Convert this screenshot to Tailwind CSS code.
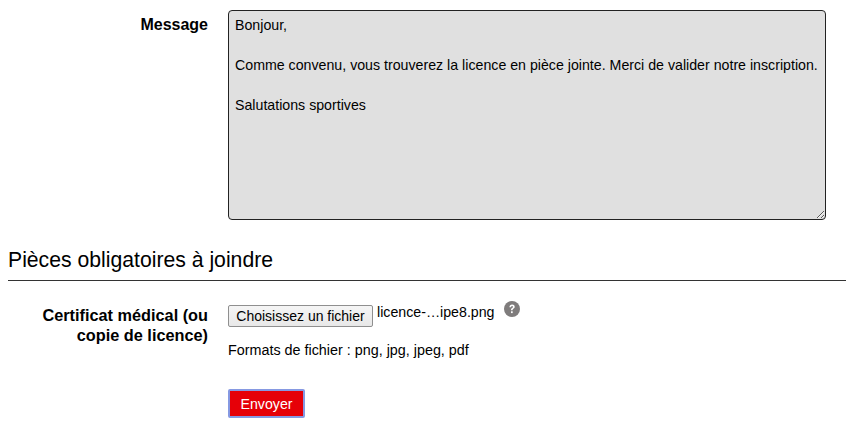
<!DOCTYPE html>
<html>
	<head>
		<title>Message</title>
		<meta charset="utf-8" />
		<script src="https://cdn.jsdelivr.net/npm/@tailwindcss/browser@4"></script>
	</head>
	<body class="bg-white text-black font-['Liberation_Sans',Arial,sans-serif] text-[14px] leading-[20px] overflow-hidden">
		<div class="w-[860px] h-[438px] px-2 pt-[10px]">
			<div class="flex">
				<label class="w-[200px] shrink-0 text-right font-bold text-[16px] leading-[30px]">Message</label>
				<textarea disabled class="ml-5 block w-[598px] h-[210px] bg-[#e0e0e0] border border-[#222] rounded-[4px] px-[6px] py-[4px] text-[14.2px] leading-[20px] text-black resize-y overflow-hidden">Bonjour,

Comme convenu, vous trouverez la licence en pièce jointe. Merci de valider notre inscription.

Salutations sportives</textarea>
			</div>
			<h2 class="mt-[28px] text-[21.2px] leading-[24px] font-normal pb-[8px] w-[838px] border-b border-[#333]">Pièces obligatoires à joindre</h2>
			<div class="flex mt-[24px]">
				<label class="w-[200px] shrink-0 text-right font-bold text-[16.3px] leading-[20px]">Certificat médical (ou copie de licence)</label>
				<div class="ml-5">
					<div class="flex items-start">
						<button class="h-[22px] w-[145px] bg-linear-to-b from-[#f5f5f5] to-[#e8e8e8] border border-[#8f8f8f] rounded-[2px] text-[14px] leading-[20px] text-black">Choisissez un fichier</button>
						<span class="ml-[4px] leading-[14px] text-[14.2px]">licence-…ipe8.png</span>
						<svg class="ml-[9.5px] mt-[-4px]" width="16" height="16" viewBox="0 0 16 16">
							<circle cx="8" cy="8" r="8" fill="#7f7c7c" />
							<path d="M5.4 6.2C5.5 4.6 6.6 3.6 8.1 3.6c1.5 0 2.6.9 2.6 2.2 0 1-.5 1.5-1.3 2-.6.4-.8.7-.8 1.4H7c0-1.1.3-1.7 1.1-2.2.6-.4.9-.7.9-1.1 0-.5-.4-.8-.9-.8-.6 0-1 .4-1.1 1.1z" fill="#fff" />
							<rect x="7" y="10.3" width="1.7" height="1.8" fill="#fff" />
						</svg>
					</div>
					<p class="mt-[13px] leading-[20px] text-[14.35px]">Formats de fichier : png, jpg, jpeg, pdf</p>
					<button class="mt-[29px] block w-[77px] h-[29px] bg-[#e60008] border-2 border-[#8699e2] rounded-[2px] text-white text-[14.2px]">Envoyer</button>
				</div>
			</div>
		</div>
	</body>
</html>
